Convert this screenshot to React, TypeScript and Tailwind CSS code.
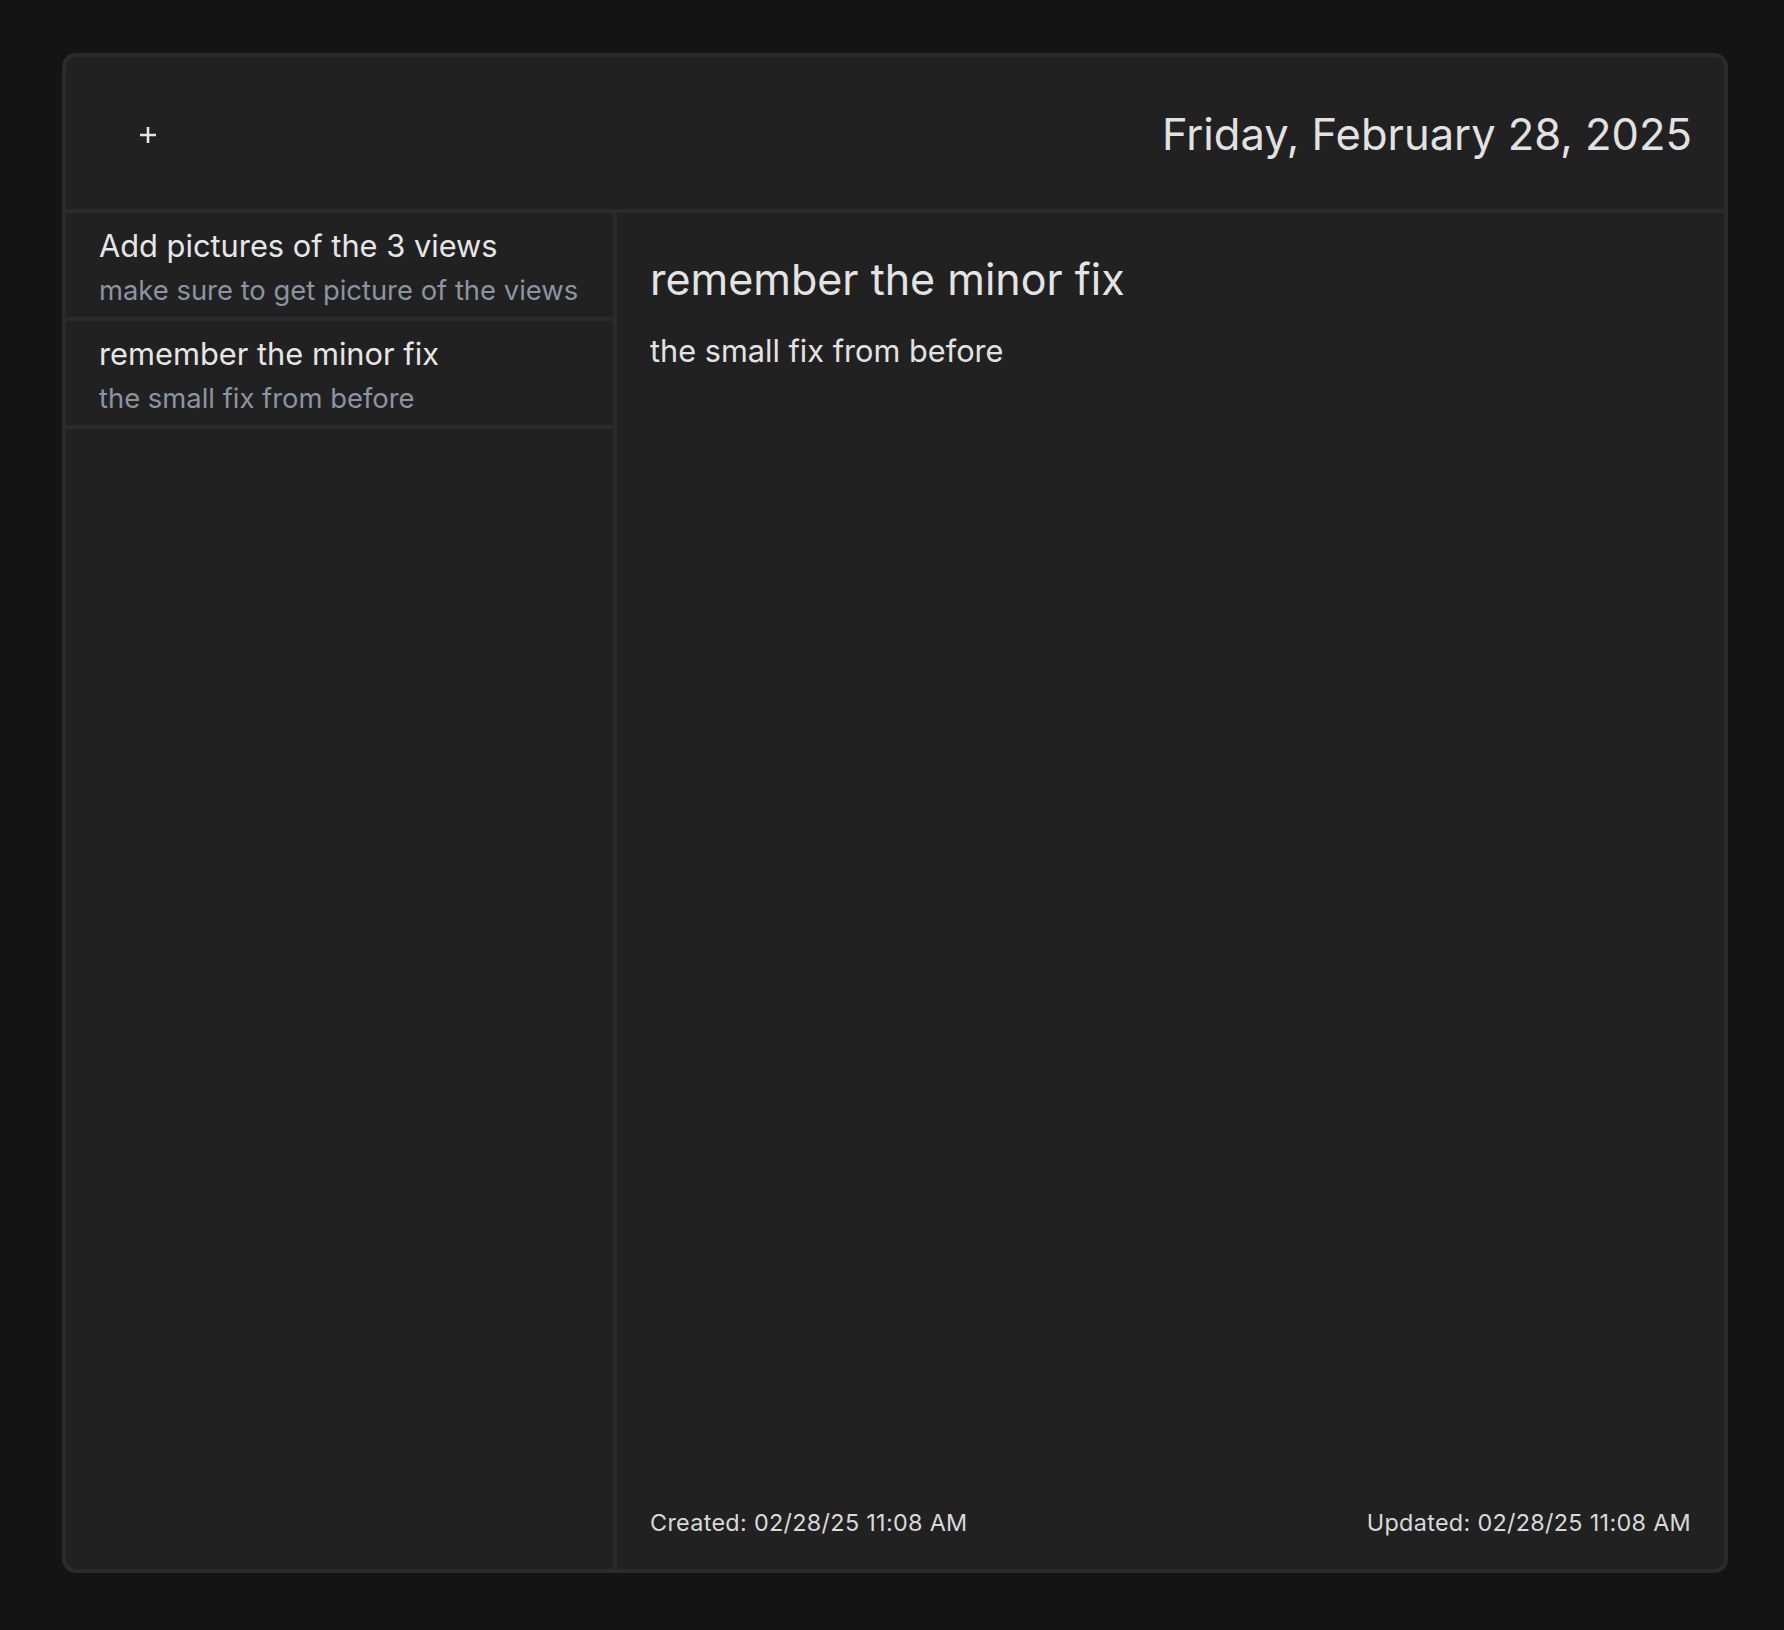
import React from "react";

type Note = {
  id: number;
  title: string;
  body: string;
};

const notes: Note[] = [
  { id: 1, title: "Add pictures of the 3 views", body: "make sure to get picture of the views" },
  { id: 2, title: "remember the minor fix", body: "the small fix from before" },
];

export default function App() {
  const active = notes[1];

  return (
    <div
      className="h-screen bg-[#141414] pl-[62px] pr-[56px] pt-[53px] pb-[57px]"
      style={{ fontFamily: "Inter, 'Noto Sans', sans-serif" }}
    >
      <div className="flex h-full flex-col overflow-hidden rounded-[14px] border-4 border-[#2b2b2b] bg-[#212121]">
        <header className="flex h-[156px] shrink-0 items-center justify-between border-b-4 border-[#2b2b2b] pl-[62px] pr-[32px] pt-[4px]">
          <button className="flex h-10 w-10 items-center justify-center text-[#e6e6e6]">
            <svg width="18" height="18" viewBox="0 0 18 18" fill="none">
              <path d="M9 1v16M1 9h16" stroke="currentColor" strokeWidth="2.6" />
            </svg>
          </button>
          <h1 className="text-[43.5px] font-normal text-[#e2e2e2]">
            Friday, February 28, 2025
          </h1>
        </header>

        <div className="flex min-h-0 flex-1">
          <aside className="w-[551px] shrink-0 border-r-4 border-[#2b2b2b]">
            {notes.map((n) => (
              <div
                key={n.id}
                className="flex h-[108px] flex-col border-b-4 border-[#2b2b2b] pl-[33px] pr-4 pt-[11px]"
              >
                <div className="text-[30.8px] leading-[44px] text-[#e6e6e6]">{n.title}</div>
                <div className="text-[27.4px] leading-[44px] text-[#8b94a1]">{n.body}</div>
              </div>
            ))}
          </aside>

          <main className="flex flex-1 flex-col justify-between px-[33px] pb-[28px] pt-[38px]">
            <div>
              <h2 className="text-[43px] leading-[56px] text-[#e4e4e4]">{active.title}</h2>
              <p className="mt-[23px] text-[30.7px] leading-[42px] text-[#e2e2e2]">{active.body}</p>
            </div>
            <div className="flex justify-between text-[23.4px] leading-[36px] tracking-[0.3px] text-[#d9d9d9]">
              <span>Created: 02/28/25 11:08 AM</span>
              <span>Updated: 02/28/25 11:08 AM</span>
            </div>
          </main>
        </div>
      </div>
    </div>
  );
}
